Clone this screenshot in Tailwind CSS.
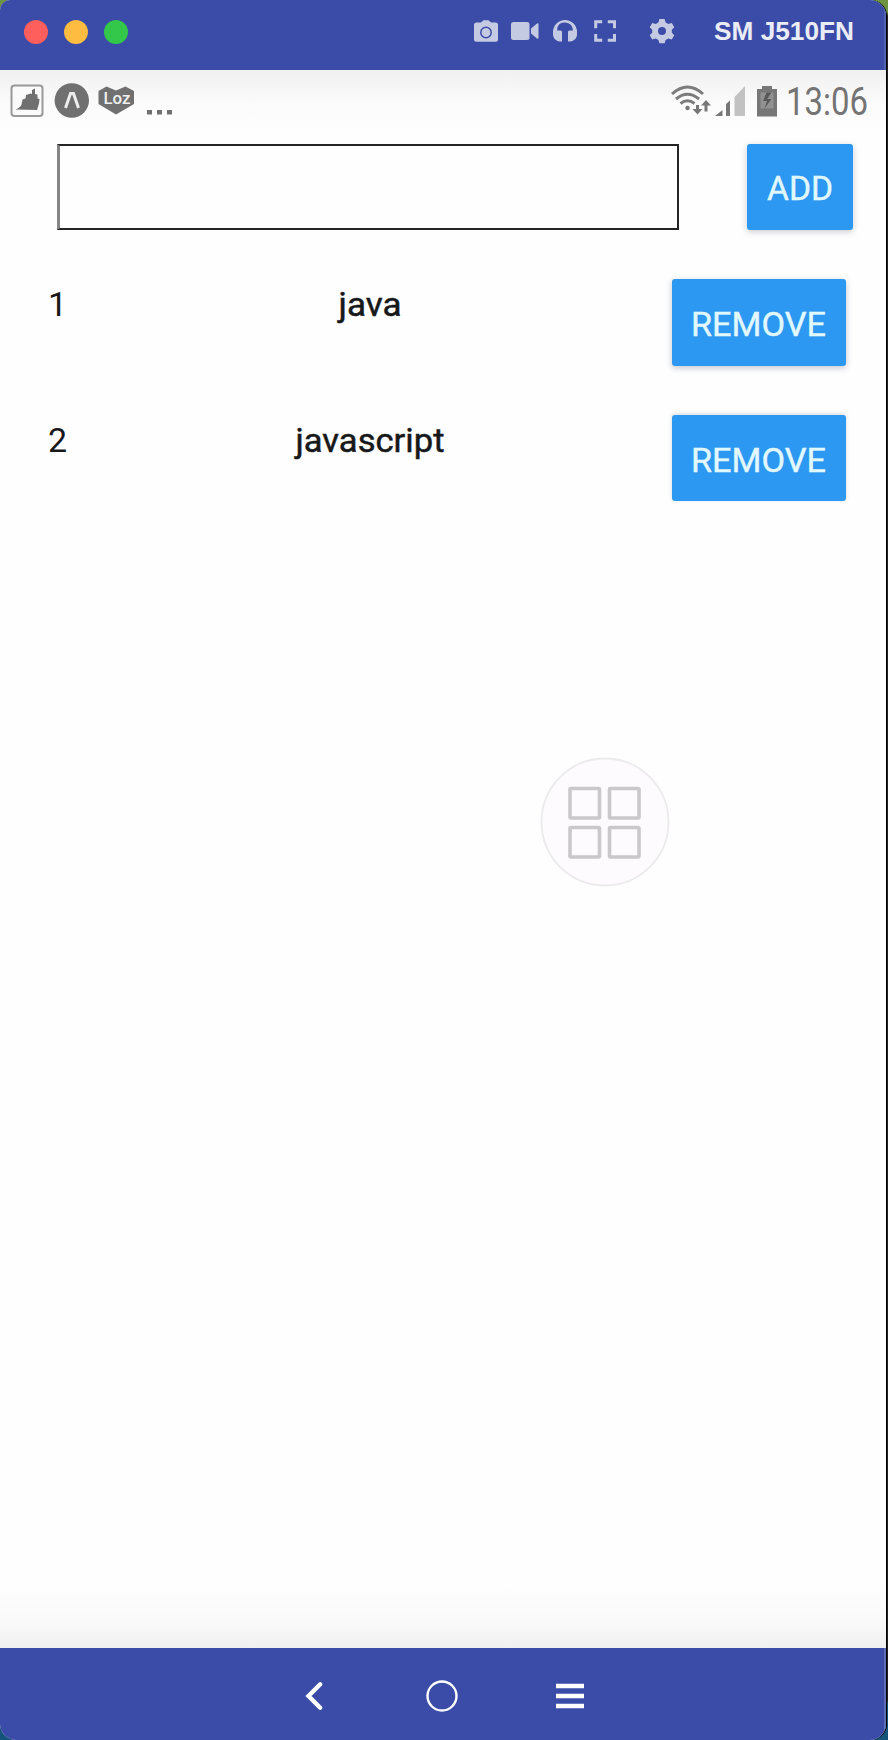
<!DOCTYPE html>
<html lang="en">
<head>
<meta charset="utf-8">
<title>SM J510FN</title>
<script src="https://cdn.jsdelivr.net/npm/@tailwindcss/browser@4"></script>
</head>
<body class="w-[888px] h-[1740px] overflow-hidden bg-[linear-gradient(#6d9440_0px,#6d9440_12px,#222_16px,#222_1700px,#14547a_1704px)]">
<div class="w-[887px] h-[1740px] bg-black rounded-tl-[10px] rounded-tr-[16px] rounded-b-[16px]">
<div class="w-[886px] h-[1740px] flex flex-col overflow-hidden rounded-tl-[10px] rounded-tr-[16px] rounded-b-[16px] bg-[#fefefe]">
  <header class="h-[70px] shrink-0 bg-[#3b4ca8] border-r-2 border-[#5363b3] flex items-center pl-6 pb-[6px]">
    <div class="flex gap-4">
      <span class="size-6 rounded-full bg-[#ff5f5c]"></span>
      <span class="size-6 rounded-full bg-[#febc40]"></span>
      <span class="size-6 rounded-full bg-[#34c84a]"></span>
    </div>
    <svg class="ml-[332px] w-[220px] h-[64px] shrink-0" viewBox="0 0 220 64" fill="#c5cae3">
      <path d="M20 24l2.500-3q.6-.7 1.500-.7h4q.9 0 1.500.7l2.500 3z"/>
      <rect x="14" y="22.500" width="24" height="19.200" rx="2.500"/>
      <circle cx="26" cy="32.500" r="5.200" fill="none" stroke="#3b4ca8" stroke-width="1.500"/>
      <rect x="51" y="22" width="18.500" height="18" rx="2.500"/>
      <path d="M71 28.500l6-5q1.500-.8 1.500.8v13.500q0 1.500-1.500.8l-6-5z"/>
      <path d="M93 34v-2a12 12 0 0 1 24 0v2q0 4-3 6l-1 .7q-1.200.8-3 .8h-2V32q0-1.500 1.500-1.500h3.500q-.5-7.500-8-8t-8 8h3.500q1.500 0 1.500 1.500v9.500h-2q-1.800 0-3-.8l-1-.7q-3-2-3-6z"/>
      <path fill="none" stroke="#c5cae3" stroke-width="3" d="M135.700 28.200v-6.500h6.500M147.800 21.700h6.700v6.500M154.500 34v6.300h-6.700M142.200 40.300h-6.500V34"/>
      <path fill-rule="evenodd" d="M199.400 19h5.200l1 3.400 2.700 1.600 3.400-1 2.600 4.200-2.500 2.500v3l2.500 2.500-2.600 4.200-3.400-1-2.700 1.600-1 3.200h-5.200l-1-3.200-2.700-1.600-3.400 1-2.600-4.200 2.500-2.500v-3l-2.500-2.500 2.600-4.200 3.400 1 2.700-1.600zM202 27a4 4 0 1 0 0 8 4 4 0 0 0 0-8z"/>
    </svg>
    <h1 class="ml-[34px] font-bold text-[26px] leading-none text-[#ebedf6] font-['Liberation_Sans',sans-serif] whitespace-nowrap"><svg class="w-[144px] h-[30px] block" viewBox="0 0 144 30" fill="currentColor"><text x="0" y="23" textLength="140" lengthAdjust="spacingAndGlyphs">SM J510FN</text></svg></h1>
  </header>

  <main class="flex-1 flex flex-col font-[Roboto,sans-serif] text-[34px] leading-[40px] text-[#17181a] bg-[linear-gradient(#f0f0f0,#fbfbfb_32px,#fefefe_64px,#fefefe_1514px,#fafafa_1550px,#f0f0f0)]">
    <div class="h-[74px] flex justify-between">
      <svg class="w-[180px] h-[60px]" viewBox="0 70 180 60" fill="#707070">
        <rect x="11.500" y="85.500" width="31" height="30.500" rx="3" fill="#fafafa" stroke="#999" stroke-width="2"/>
        <path d="M15.500 109.500q5-2 6-5l1-5 3-1 .5-3.500 4.500-1.500 1.500.5v-4l3-1.500v5.500l2.500.5v4l2 .5-.5 4.500-2 6.500z"/>
        <circle cx="71.800" cy="100.500" r="17.200"/>
        <path d="M65.500 108l5-14.500h3l5 14.500" fill="none" stroke="#ededed" stroke-width="3"/>
        <path d="M98.500 91l8-4.500 9.500 4 9.500-4 8.500 4.500v13l-18 10.500-17.500-10.500z"/>
        <text x="103.500" y="104" font-size="17" font-weight="500" textLength="27" lengthAdjust="spacingAndGlyphs" fill="#f0f0f0">Loz</text>
        <path d="M147 110h5v4.500h-5zM157 110h5v4.500h-5zM167 110h5v4.500h-5z"/>
      </svg>
      <svg class="w-[226px] h-[60px]" viewBox="660 70 226 60" fill="#777">
        <g fill="none" stroke="#7c7c7c" stroke-width="3">
          <path d="M672 94q15.500-14 31 0M676 99q11.500-9.500 23 0M680.500 103.500q7-5.500 14 0"/>
        </g>
        <circle cx="687.500" cy="108" r="2.200"/>
        <path d="M696 105h3v4h3.500l-5 5.500-5-5.500h3.500zM704.500 111.500v-6H701l5-5.500 5 5.500h-3.500v6z"/>
        <path d="M715 116l7.500-6v6zM726 104l4-3.500V116h-4z"/>
        <path d="M734.500 97l10.500-11v30h-10.500z" fill="#c2c2c2"/>
        <path d="M762 86h10v3h5v27.500h-20V89h5z"/>
        <path d="M760.500 92.500h13v16h-13z" fill="#929292"/>
        <path d="M771.500 92.500h-5l-3.500 8.500h4l-2.500 7.500 7-9.500h-4.500z" fill="#595959"/>
        <text x="786" y="115" font-size="38" textLength="82" lengthAdjust="spacingAndGlyphs" fill="#747474">13:06</text>
      </svg>
    </div>

    <div class="flex items-center pl-[57px] pr-[33px] h-[86px] justify-between">
      <input aria-label="New item" class="w-[622px] h-[86px] border-2 border-[#252525] border-l-[3px] border-l-[#858585] bg-[#fefefe] px-4 outline-none">
      <button class="w-[106px] h-[86px] rounded-[3px] bg-[#2d98f1] text-[#e2f8ff] shadow-[0_2px_6px_rgba(40,50,80,.24)] pt-[2px] flex items-center justify-center"><svg class="w-[66px] h-[40px]" viewBox="0 0 66 40" fill="currentColor"><text x="0" y="32" textLength="66" lengthAdjust="spacingAndGlyphs" stroke="currentColor" stroke-width=".4">ADD</text></svg></button>
    </div>

    <ul class="flex flex-col">
      <li class="mt-[49px] h-[87px] flex pl-[48px] pr-[40px]">
        <span class="w-[20px] pt-[5px]">1</span>
        <span class="flex-1 text-center pt-[5px]"><svg class="inline-block align-top w-[160px] h-[50px]" viewBox="0 0 160 50" fill="currentColor"><text x="48.500" y="32" textLength="63" lengthAdjust="spacingAndGlyphs" stroke="currentColor" stroke-width=".5">java</text></svg></span>
        <button class="w-[174px] h-[87px] rounded-[3px] bg-[#2d98f1] text-[#e2f8ff] shadow-[0_2px_6px_rgba(40,50,80,.28)] flex items-center justify-center pt-[3px]"><svg class="w-[136px] h-[40px]" viewBox="0 0 136 40" fill="currentColor"><text x="0" y="32" textLength="135" lengthAdjust="spacingAndGlyphs" stroke="currentColor" stroke-width=".4">REMOVE</text></svg></button>
      </li>
      <li class="mt-[49px] h-[86px] flex pl-[48px] pr-[40px]">
        <span class="w-[20px] pt-[5px]">2</span>
        <span class="flex-1 text-center pt-[5px]"><svg class="inline-block align-top w-[160px] h-[50px]" viewBox="0 0 160 50" fill="currentColor"><text x="5.500" y="32" textLength="149" lengthAdjust="spacingAndGlyphs" stroke="currentColor" stroke-width=".5">javascript</text></svg></span>
        <button class="w-[174px] h-[86px] rounded-[3px] bg-[#2d98f1] text-[#e2f8ff] shadow-[0_-1px_4px_rgba(40,50,80,.18)] flex items-center justify-center pt-[3px]"><svg class="w-[136px] h-[40px]" viewBox="0 0 136 40" fill="currentColor"><text x="0" y="32" textLength="135" lengthAdjust="spacingAndGlyphs" stroke="currentColor" stroke-width=".4">REMOVE</text></svg></button>
      </li>
    </ul>

    <div class="mt-[256px] ml-[540px] size-[130px] shrink-0">
      <svg class="size-[130px]" viewBox="540 757 130 130" fill="none">
        <circle cx="605" cy="822" r="63.500" fill="#fdfbfd" stroke="#ebeaec" stroke-width="1.800"/>
        <g stroke="#cac8ca" stroke-width="3.600"><rect x="570" y="788.500" width="29.500" height="29.500" rx="1"/><rect x="609.500" y="788.500" width="29.500" height="29.500" rx="1"/><rect x="570" y="827.500" width="29.500" height="29.500" rx="1"/><rect x="609.500" y="827.500" width="29.500" height="29.500" rx="1"/></g>
      </svg>
    </div>
  </main>

  <nav class="h-[92px] shrink-0 bg-[#3b4ca8] border-r-2 border-[#5f6db6] flex items-center">
    <svg class="ml-[280px] w-[340px] h-[92px]" viewBox="280 1648 340 92" fill="none" stroke="#fff">
      <path d="M320.200 1684.300L308.500 1696l11.700 11.700" stroke-width="4.400" stroke-linecap="round"/>
      <circle cx="442" cy="1696" r="14.500" stroke-width="2.400"/>
      <path d="M556 1686h28M556 1696h28M556 1706h28" stroke-width="4.400"/>
    </svg>
  </nav>
</div>
</div>
</body>
</html>
